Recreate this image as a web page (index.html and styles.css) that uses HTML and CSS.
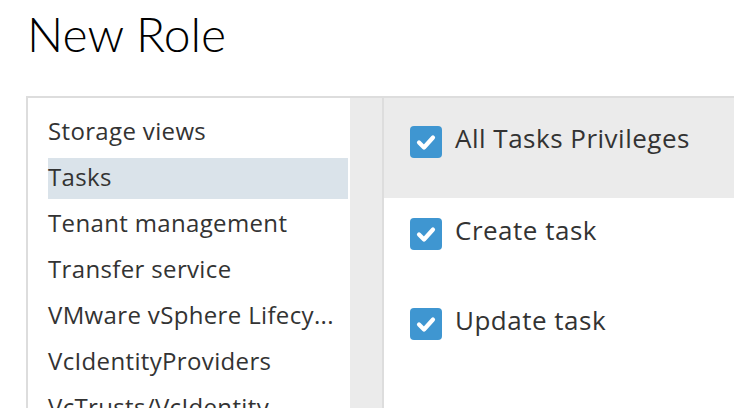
FILE: index.html
```html
<!DOCTYPE html>
<html lang="en">
<head>
  <meta charset="UTF-8">
  <meta name="viewport" content="width=device-width, initial-scale=1.0">
  <title>New Role</title>
  <link rel="stylesheet" href="styles.css">
</head>
<body>
  <h1 class="page-title">New Role</h1>
  <div class="role-panel">
    <!-- Daftar kategori privilege -->
    <div class="category-pane">
      <ul class="category-list">
        <li class="category-item">Storage views</li>
        <li class="category-item active">Tasks</li>
        <li class="category-item">Tenant management</li>
        <li class="category-item">Transfer service</li>
        <li class="category-item">VMware vSphere Lifecy...</li>
        <li class="category-item">VcIdentityProviders</li>
        <li class="category-item">VcTrusts/VcIdentity</li>
      </ul>
    </div>
    <div class="splitter"></div>
    <!-- Daftar privilege untuk kategori terpilih -->
    <div class="privilege-pane">
      <div class="privilege-row all-row">
        <span class="checkbox">
          <svg viewBox="0 0 32 32" width="32" height="32"><path d="M9 16.5 L14 21.5 L23 11.5" fill="none" stroke="#fff" stroke-width="4.2" stroke-linecap="round" stroke-linejoin="round"/></svg>
        </span>
        <span class="privilege-label">All Tasks Privileges</span>
      </div>
      <div class="privilege-row">
        <span class="checkbox">
          <svg viewBox="0 0 32 32" width="32" height="32"><path d="M9 16.5 L14 21.5 L23 11.5" fill="none" stroke="#fff" stroke-width="4.2" stroke-linecap="round" stroke-linejoin="round"/></svg>
        </span>
        <span class="privilege-label">Create task</span>
      </div>
      <div class="privilege-row">
        <span class="checkbox">
          <svg viewBox="0 0 32 32" width="32" height="32"><path d="M9 16.5 L14 21.5 L23 11.5" fill="none" stroke="#fff" stroke-width="4.2" stroke-linecap="round" stroke-linejoin="round"/></svg>
        </span>
        <span class="privilege-label">Update task</span>
      </div>
    </div>
  </div>
</body>
</html>
```

FILE: styles.css
```css
/* Global */
html, body {
  overflow: hidden;
}
body {
  font-family: 'Open Sans', 'Noto Sans', sans-serif;
  background: #fff;
  margin: 0;
  padding: 0;
  color: #333;
  width: 734px;
  height: 408px;
}
.page-title {
  margin: 0;
  padding: 6px 0 0 27px;
  height: 96px;
  box-sizing: border-box;
  font-family: Lato, sans-serif;
  font-size: 48px;
  font-weight: 300;
  line-height: 56px;
  color: #000;
}
/* Panel utama */
.role-panel {
  display: flex;
  margin-left: 26px;
  width: 760px;
  height: 400px;
  border-top: 2px solid #ddd;
  border-left: 2px solid #ddd;
}
.category-pane {
  width: 322px;
  flex-shrink: 0;
  background: #fff;
  overflow: hidden;
}
.category-list {
  list-style: none;
  margin: 0;
  padding: 14px 0 0 20px;
}
.category-item {
  width: 300px;
  height: 41px;
  line-height: 37px;
  margin-bottom: 5px;
  font-size: 24px;
  letter-spacing: 0.35px;
  white-space: nowrap;
}
.category-item.active {
  background: #dae3ea;
}
.splitter {
  width: 32px;
  flex-shrink: 0;
  background: #ebebeb;
  border-right: 2px solid #ddd;
}
.privilege-pane {
  flex: 1;
}
.privilege-row {
  display: flex;
  align-items: flex-start;
  height: 90px;
  padding: 20px 0 0 26px;
  box-sizing: border-box;
}
.privilege-row.all-row {
  background: #ebebeb;
  height: 100px;
  padding-top: 28px;
}
.checkbox {
  width: 32px;
  height: 32px;
  border-radius: 4px;
  background: #3f96d1;
  flex-shrink: 0;
}
.checkbox svg {
  display: block;
}
.privilege-label {
  margin-left: 13px;
  font-size: 26px;
  line-height: 24px;
  letter-spacing: 0.5px;
}
```
